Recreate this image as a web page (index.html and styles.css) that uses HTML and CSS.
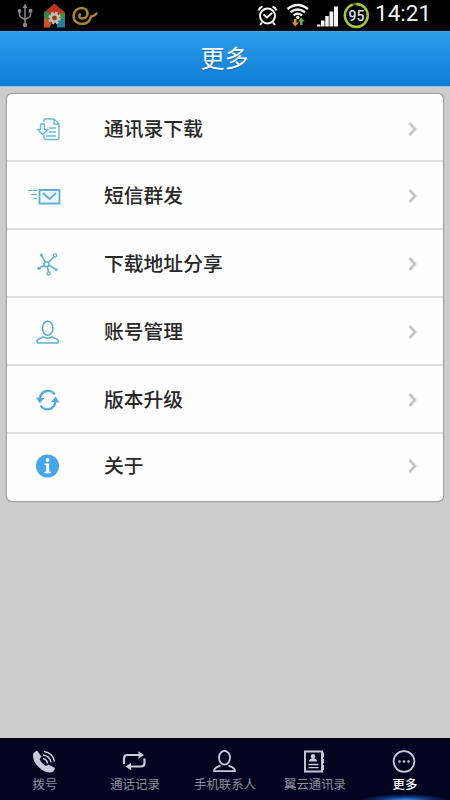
FILE: index.html
```html
<!DOCTYPE html>
<html lang="zh-CN">
<head>
<meta charset="utf-8">
<title>更多</title>
<link rel="stylesheet" href="styles.css">
</head>
<body>
<div class="status">
  <svg class="status-left" width="100" height="31" viewBox="0 0 100 31">
    <g fill="none" stroke="#85858a" stroke-width="1.5">
      <path d="M25 7v17M19.500 12v3q0 2 2 2.500l3.500 2M30.500 12v3q0 2-2 2.500L25 19.500"/>
    </g>
    <path d="M22.500 8L25 3.500 27.500 8z" fill="#85858a"/>
    <circle cx="25" cy="25" r="2.300" fill="#85858a"/>
    <circle cx="19.500" cy="11" r="1.900" fill="#85858a"/>
    <path d="M28.700 9h3.600v3.600h-3.600z" fill="#85858a"/>
    <path d="M44 12.500L54.500 4v13L44 21z" fill="#318545"/>
    <path d="M45.500 11.500L54.500 3.500 65 12.500 58 15z" fill="#bd3421"/>
    <path d="M44 18l8 3-2 6.500h-6z" fill="#c8561c"/>
    <path d="M65 12.500v8l-6-2v-5z" fill="#458d3e"/>
    <path d="M57 20l8-1.500v9h-8z" fill="#247fa0"/>
    <circle cx="54.500" cy="18" r="5" fill="none" stroke="#c5beb6" stroke-width="2.800" stroke-dasharray="2.300 1.627"/>
    <circle cx="54.500" cy="18" r="3.600" fill="#98382b" stroke="#c5beb6" stroke-width="2.400"/>
    <path d="M80 14.500c-1.500 1.500-.5 4 2 4 3.500 0 5.500-2.500 5.500-5 0-3.500-2.500-5.500-6-5.500-4.500 0-8 3.500-8 8 0 4.500 3.500 8 8.500 8 5 0 8-3 9-7.500q3 0 5.500-3" fill="none" stroke="#ab8137" stroke-width="2.500" stroke-linecap="round" stroke-linejoin="round"/>
  </svg>
  <div class="status-right">
  <svg width="120" height="31" viewBox="255 0 120 31">
    <g fill="none" stroke="#f4f4f4" stroke-width="2">
      <circle cx="267.500" cy="16" r="7.500"/>
      <path d="M263.500 14.500l3.500 3 5-4.500M258.500 10.500q1-3 4-4M276.500 10.500q-1-3-4-4M262 22.500l-2 2.500M273 22.500l2 2.500"/>
    </g>
    <g fill="none" stroke="#f4f4f4" stroke-width="2.300">
      <path d="M287.500 9Q297.500 1 308 9M290.500 12.200q7-5.500 14.500 0M293.500 15.400q4-3.200 8.500 0"/>
    </g>
    <circle cx="297.700" cy="17.400" r="1.700" fill="#f4f4f4"/>
    <path d="M294 19h2.500v3.500h2.300l-3.500 4-3.500-4h2.200z" fill="#ef8e36"/>
    <path d="M300 25h2.500v-3.500h2.200l-3.400-4-3.500 4h2.200z" fill="#6bad48"/>
    <path d="M317 24.500h3.500V26.500H317zM321 20.500h3.500v6H321zM325.200 16h3.600v10.500h-3.600zM329.500 11.500h3.800v15h-3.800zM334 6.500h4v20h-4z" fill="#f4f4f4"/>
    <circle cx="356.300" cy="15.500" r="11.500" fill="none" stroke="#55652a" stroke-width="2.300"/>
    <circle cx="356.300" cy="15.500" r="11.500" fill="none" stroke="#a4c73b" stroke-width="2.300" stroke-dasharray="68 5" transform="rotate(-90 356.300 15.500)"/>
    <text x="356.500" y="20.700" class="battery">95</text>
  </svg>
  <span class="clock">14:21</span>
  </div>
</div>
<header class="title">更多</header>
<main class="content">
  <ul class="card">
    <li class="row row-first">
      <svg class="icon" width="40" height="28" viewBox="0 0 40 28">
        <g fill="none" stroke="#6db9dc" stroke-width="1.400" stroke-linejoin="round">
          <path d="M16 7V5.500Q16 4 17.500 4H26l5 5v13.500q0 2-2 2H18q-2 0-2-2V20M26 4v5h5M21 13h7M21 17h7M18 21h10"/>
          <path d="M12.500 9h4v5.500H20l-5.300 5-5.200-5h3z" fill="#edf9fd"/>
        </g>
      </svg>
      <span class="label">通讯录下载</span>
      <svg class="chevron" width="10" height="16" viewBox="0 0 10 16"><path d="M1.500 2L7 8l-5.500 6"/></svg>
    </li>
    <li class="row">
      <svg class="icon" width="40" height="28" viewBox="0 0 40 28">
        <g fill="none" stroke="#5eafd9" stroke-width="1.500">
          <path d="M11.500 8h20v13.500h-20z" fill="#eefaff" stroke-width="1.800"/>
          <path d="M15 11l6.500 6 6.500-6" stroke-width="1.800"/>
          <path d="M0 8.500h9M3 12.500h6M5.500 16.500H9" stroke-width="1.200"/>
        </g>
      </svg>
      <span class="label">短信群发</span>
      <svg class="chevron" width="10" height="16" viewBox="0 0 10 16"><path d="M1.500 2L7 8l-5.500 6"/></svg>
    </li>
    <li class="row">
      <svg class="icon" width="40" height="28" viewBox="0 0 40 28">
        <g fill="none" stroke="#62b2d6" stroke-width="1.300">
          <path d="M18.500 14L13.500 5.500M19 14l7.500-8M18.500 14l-7 4M19 14l9 5.500M19 14l1.500 8.500" stroke-width="1.500"/>
          <circle cx="18.500" cy="14.200" r="2.500" fill="#f3fbff" stroke-width="1.600"/>
          <circle cx="27" cy="5.300" r="1.700" fill="#fff"/><circle cx="20.500" cy="23.500" r="1.700" fill="#fff"/>
        </g>
        <g fill="#62b2d6"><circle cx="13.300" cy="5" r="1.500"/><circle cx="11" cy="18.300" r="1.600"/><circle cx="28.300" cy="19.800" r="1.500"/></g>
      </svg>
      <span class="label">下载地址分享</span>
      <svg class="chevron" width="10" height="16" viewBox="0 0 10 16"><path d="M1.500 2L7 8l-5.500 6"/></svg>
    </li>
    <li class="row">
      <svg class="icon" width="40" height="28" viewBox="0 0 40 28">
        <g fill="none" stroke="#5eafd5" stroke-width="1.600">
          <ellipse cx="19.700" cy="10.300" rx="5.200" ry="7"/>
          <path d="M15.500 19c-2 1-6.500 1.500-6.500 4.500q0 1.500 1.500 1.500h18.500q1.500 0 1.500-1.500c0-3-4.500-3.500-6.500-4.500q-4.200 2-8.500 0z"/>
        </g>
      </svg>
      <span class="label">账号管理</span>
      <svg class="chevron" width="10" height="16" viewBox="0 0 10 16"><path d="M1.500 2L7 8l-5.500 6"/></svg>
    </li>
    <li class="row">
      <svg class="icon" width="40" height="28" viewBox="0 0 40 28">
        <path d="M12 12C13.500 3.500 23 3 26.800 8.500M27.500 16C26 24.500 16.500 25.500 12.800 19.500" fill="none" stroke="#55aadf" stroke-width="2.300"/>
        <path d="M8 11.500l8.500.5-4.700 5.500zM31.500 16.500L23 16l4.700-5.500z" fill="#55aadf"/>
      </svg>
      <span class="label">版本升级</span>
      <svg class="chevron" width="10" height="16" viewBox="0 0 10 16"><path d="M1.500 2L7 8l-5.500 6"/></svg>
    </li>
    <li class="row row-last">
      <svg class="icon" width="40" height="28" viewBox="0 0 40 28">
        <circle cx="19.500" cy="14" r="11.500" fill="#47a5ec"/>
        <circle cx="19.500" cy="8" r="1.900" fill="#fff"/>
        <path d="M16.500 11.500h4.600v8.300h1.700v1.500h-6.500v-1.500h1.800V13h-1.600z" fill="#fff"/>
      </svg>
      <span class="label">关于</span>
      <svg class="chevron" width="10" height="16" viewBox="0 0 10 16"><path d="M1.500 2L7 8l-5.500 6"/></svg>
    </li>
  </ul>
</main>
<nav class="tabs">
  <div class="tab">
    <svg width="26" height="26" viewBox="0 0 26 26">
      <path d="M1.500 4l3.500-2.500 4.500 6-2 2.500q2 4.500 6.500 7l2.500-1.500 6.500 3.500q-1 4.500-5 4.500C10 23.500-1.500 13 1.500 4z" fill="#c9cad8"/>
      <path d="M11 9.500q4 1 4.500 5M11 6q7 1 8 7.500M12 2.500q9 1.500 10.500 10" fill="none" stroke="#c9cad8" stroke-width="1.600"/>
    </svg>
    <span>拨号</span>
  </div>
  <div class="tab">
    <svg width="26" height="26" viewBox="0 0 26 26">
      <path d="M2 15V9.500q0-3.500 3.500-3.500H18M22.500 9.500V14q0 3.500-3.500 3.500H8" fill="none" stroke="#c9cad8" stroke-width="2.200"/>
      <path d="M16.500 2.300L22 6l-5.500 3.700zM9 13.800l-5.500 3.700L9 21.200z" fill="#c9cad8"/>
    </svg>
    <span>通话记录</span>
  </div>
  <div class="tab">
    <svg width="26" height="26" viewBox="0 0 26 26">
      <g fill="none" stroke="#c9cad8" stroke-width="1.800"><ellipse cx="12.500" cy="8.700" rx="5.500" ry="6.900"/><path d="M8.500 16.500c-2 1.200-6.500 1.500-6.500 5.700h21c0-4.200-4.500-4.500-6.500-5.700"/></g>
    </svg>
    <span>手机联系人</span>
  </div>
  <div class="tab">
    <svg width="26" height="26" viewBox="0 0 26 26">
      <path d="M3 2.500h17v20H3z" fill="none" stroke="#c9cad8" stroke-width="1.900"/>
      <path d="M19.500 3.500h2.500v5h-2.500zM19.500 10h2.500v4.500h-2.500zM19.500 16h2.500v5h-2.500zM7 12.500q0-3 4-3.500 4 .5 4 3.500z" fill="#c9cad8"/>
      <circle cx="11" cy="7.300" r="2.200" fill="#c9cad8"/>
      <path d="M6.500 15.500h10M6.500 18.700h10" stroke="#c9cad8" stroke-width="1.300"/>
    </svg>
    <span>翼云通讯录</span>
  </div>
  <div class="tab tab-active">
    <svg width="26" height="26" viewBox="0 0 26 26">
      <circle cx="12" cy="12.500" r="10.400" fill="none" stroke="#c9cad8" stroke-width="1.800"/>
      <g fill="#c9cad8"><circle cx="7.500" cy="12.500" r="1.300"/><circle cx="12" cy="12.500" r="1.300"/><circle cx="16.500" cy="12.500" r="1.300"/></g>
    </svg>
    <span>更多</span>
  </div>
</nav>
</body>
</html>
```
FILE: styles.css
```css
* { box-sizing: border-box; }
body {
  margin: 0;
  width: 450px;
  height: 800px;
  display: flex;
  flex-direction: column;
  overflow: hidden;
  background: #ccc;
  font-family: Roboto, "Noto Sans CJK SC", sans-serif;
}
svg { display: block; flex: none; }
.status {
  height: 31px;
  background: #000;
  display: flex;
  justify-content: space-between;
}
.status-right { display: flex; width: 195px; }
.battery {
  font: 500 14px Roboto, sans-serif;
  fill: #d9dde9;
  text-anchor: middle;
}
.clock {
  font-size: 22.5px;
  line-height: 27px;
  color: #f4f4f4;
  white-space: nowrap;
}
.title {
  height: 56px;
  border-top: 1px solid #45a2de;
  border-bottom: 1px solid #8ccaf2;
  background: linear-gradient(#2f9cea, #0c7ed8);
  color: #fff;
  font-size: 24px;
  line-height: 54px;
  text-align: center;
  text-indent: -1px;
  text-shadow: 0 1px 1px #1262a5;
}
.content { flex: 1; padding: 7px; }
.card {
  list-style: none;
  margin: 0;
  padding: 0;
  height: 407px;
  background: #fefefe;
  border-radius: 5px;
  box-shadow: 0 0 1px 0.5px #999;
}
.row {
  height: 68px;
  display: flex;
  align-items: center;
  padding: 1px 25px 0 21px;
  border-bottom: 2px solid #dedede;
}
.row-first { padding-top: 3px; }
.row-last {
  height: 67px;
  padding-top: 0;
  padding-bottom: 3px;
  border-bottom: 0;
}
.label {
  flex: 1;
  margin-left: 36px;
  padding-top: 2px;
  font-size: 19.8px;
  line-height: 28px;
  font-weight: 500;
  color: #272727;
}
.chevron path { fill: none; stroke: #c4c4c4; stroke-width: 2.6; }
.tabs {
  height: 62px;
  display: grid;
  grid-template-columns: repeat(5, 1fr);
  background: #020420;
}
.tab {
  display: flex;
  flex-direction: column;
  align-items: center;
  padding-top: 11px;
  color: #8e8f9f;
  font-size: 12.4px;
  line-height: 20px;
}
.tab-active {
  color: #fff;
  font-weight: 500;
  background: radial-gradient(ellipse 44px 6px at 50% 100%, #2f8df0, rgba(20, 80, 180, .5) 60%, transparent);
}
```
